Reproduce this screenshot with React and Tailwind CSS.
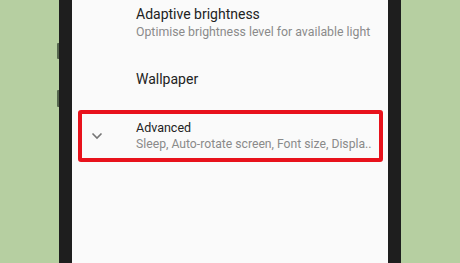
import React from 'react';

const Chevron = () => (
    <svg width="12" height="8" viewBox="0 0 12 8" fill="none" className="text-[#757575]">
        <path d="M1.5 1.5 L6 6 L10.5 1.5" stroke="currentColor" strokeWidth="1.6" />
    </svg>
);

const App = () => {
    return (
        <div className="flex w-[460px] h-[263px] overflow-hidden bg-[#b6cfa1] font-['Roboto',sans-serif]">
            {/* левая сторона с кнопками */}
            <div className="flex flex-col items-end w-[59px] shrink-0">
                <div className="w-[2px] h-[16px] mt-[43px] bg-[#56664f] rounded-l-[1px]"></div>
                <div className="w-[2px] h-[17px] mt-[31px] bg-[#56664f] rounded-l-[1px]"></div>
            </div>

            {/* телефон */}
            <div className="flex w-[342px] shrink-0 bg-[#1e1e1e] px-[13px]">
                <div className="flex flex-col w-full bg-[#fafafa]">
                    <div className="pl-[64px] pt-[6px]">
                        <p className="text-[14px] leading-[17px] text-[#222]">Adaptive brightness</p>
                        <p className="text-[12.3px] leading-[16px] mt-[1px] text-[#8a8a8a]">
                            Optimise brightness level for available light
                        </p>
                    </div>

                    <div className="pl-[64px] mt-[31px]">
                        <p className="text-[14px] leading-[17px] text-[#222]">Wallpaper</p>
                    </div>

                    <div className="flex items-center h-[52px] mt-[22px] ml-[6px] mr-[5px] border-[4px] border-[#e8121c] rounded-[3px]">
                        <div className="w-[54px] shrink-0 pl-[9px] flex">
                            <Chevron />
                        </div>
                        <div className="flex flex-col">
                            <p className="text-[12.5px] leading-[16px] text-[#222]">Advanced</p>
                            <p className="text-[12.2px] leading-[16px] text-[#8a8a8a] whitespace-nowrap">
                                Sleep, Auto-rotate screen, Font size, Displa..
                            </p>
                        </div>
                    </div>
                </div>
            </div>

            <div className="flex-1"></div>
        </div>
    );
};

export default App;
